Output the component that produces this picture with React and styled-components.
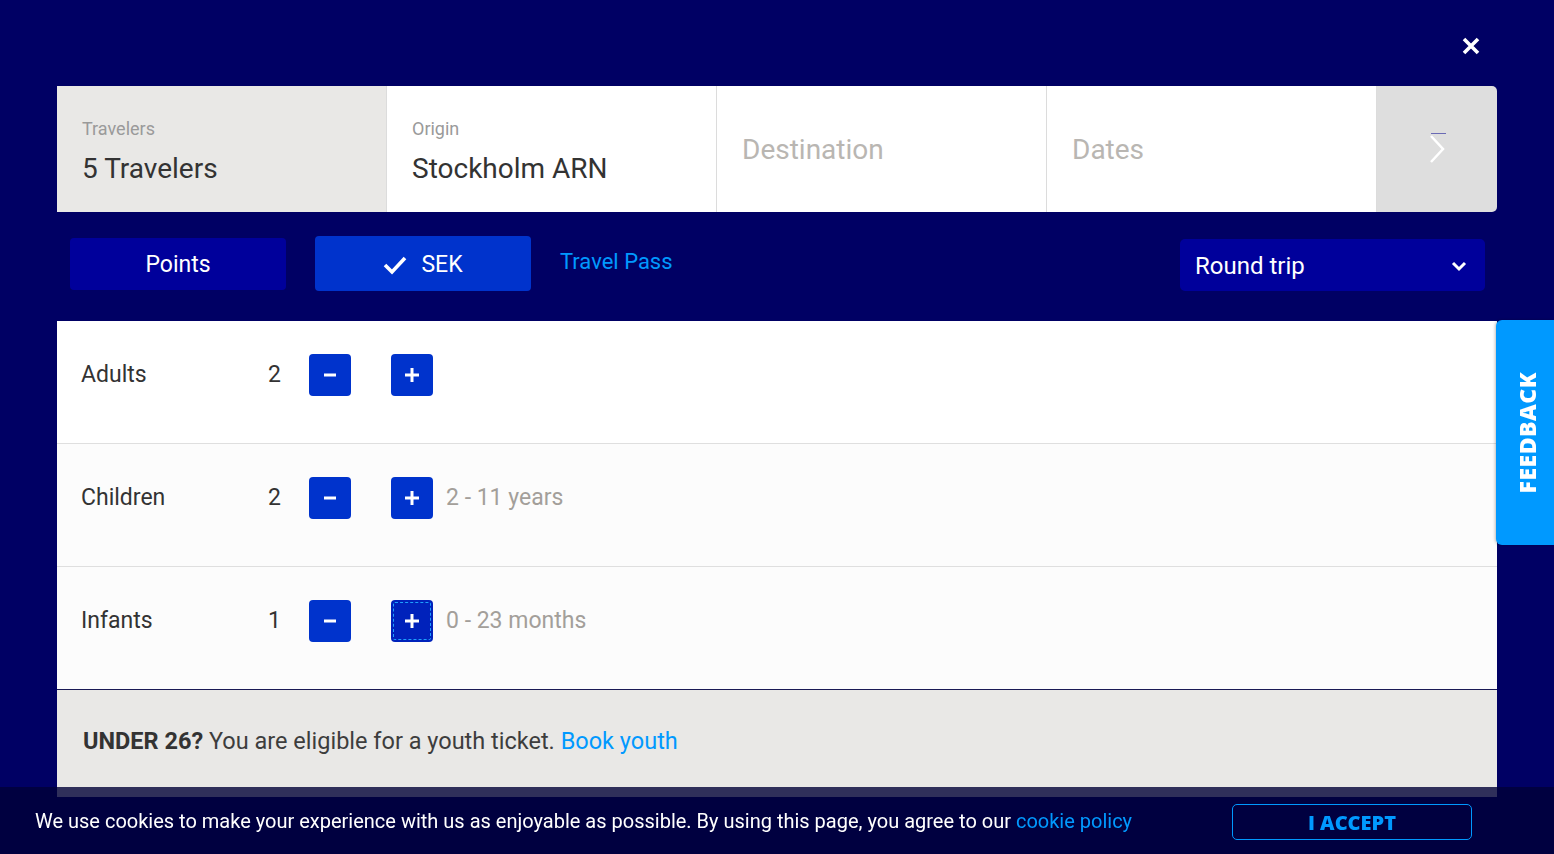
import styled, { createGlobalStyle } from "styled-components";

const GlobalStyle = createGlobalStyle`
  html, body {
    margin: 0;
    background: #000064;
    font-family: Roboto, "Liberation Sans", sans-serif;
    overflow: hidden;
  }
`;

const Page = styled.div`
  position: relative;
  padding: 86px 57px 0;
  height: 768px;
`;

const CloseButton = styled.button`
  position: absolute;
  top: 34px;
  right: 71px;
  width: 24px;
  height: 24px;
  padding: 0;
  border: 0;
  background: transparent;
  cursor: pointer;
`;

const SearchBar = styled.div`
  display: grid;
  grid-template-columns: repeat(4, 330px) 120px;
  height: 126px;
  border-radius: 0 5px 5px 0;
  overflow: hidden;
`;

const Field = styled.div`
  display: flex;
  flex-direction: column;
  justify-content: center;
  padding: 0 24px 0 25px;
  background: ${p => p.$bg || "#fff"};
  border-right: 1px solid #dcdcdc;
`;

const FieldLabel = styled.div`
  font-size: 18px;
  color: #9a9a9a;
  margin: 4px 0 13px;
`;

const FieldValue = styled.div`
  font-size: 28px;
  color: ${p => (p.$placeholder ? "#b9b6b2" : "#333")};
`;

const NextCell = styled.div`
  position: relative;
  display: flex;
  align-items: center;
  justify-content: center;
  background: #dedede;
`;

const FocusMark = styled.span`
  position: absolute;
  left: 54px;
  top: 47px;
  width: 15px;
  height: 1px;
  background: #6a6ab4;
`;

const Options = styled.div`
  display: flex;
  align-items: center;
  padding: 24px 12px 30px 13px;
`;

const Toggle = styled.button`
  display: flex;
  align-items: center;
  justify-content: center;
  gap: 14px;
  width: 216px;
  height: ${p => (p.$active ? "55px" : "52px")};
  margin-right: 29px;
  padding: 2px 0 0;
  border: 0;
  border-radius: 4px;
  background: ${p => (p.$active ? "#0033cc" : "#00009b")};
  color: #fff;
  font-family: inherit;
  font-size: 23px;
  cursor: pointer;
`;

const TextLink = styled.a`
  color: #0099ff;
  font-size: ${p => p.$size || "inherit"};
  text-decoration: none;
  cursor: pointer;
`;

const TravelPass = styled(TextLink)`
  margin-top: -5px;
  font-size: 22px;
`;

const Select = styled.button`
  display: flex;
  align-items: center;
  justify-content: space-between;
  width: 305px;
  height: 52px;
  margin: 3px 0 0 auto;
  padding: 2px 18px 0 15px;
  border: 0;
  border-radius: 5px;
  background: #00009b;
  color: #fff;
  font-family: inherit;
  font-size: 24px;
  cursor: pointer;
`;

const Panel = styled.div`
  background: #fff;
`;

const Row = styled.div`
  display: flex;
  align-items: center;
  height: 123px;
  box-sizing: border-box;
  padding: 0 0 15px 24px;
  background: ${p => (p.$alt ? "#fcfcfc" : "#fff")};
  border-bottom: 1px solid #dfdfdf;
  &:last-child {
    border-bottom: 1px solid #1a1a55;
  }
`;

const RowLabel = styled.div`
  width: 187px;
  font-size: 23px;
  color: #333;
`;

const Count = styled.div`
  width: 41px;
  font-size: 23px;
  color: #333;
`;

const Step = styled.button`
  display: flex;
  align-items: center;
  justify-content: center;
  width: 42px;
  height: 42px;
  padding: 0;
  margin-right: ${p => p.$gap || "0"};
  border: 0;
  border-radius: 4px;
  background: ${p => (p.$focus ? "#0022bb" : "#0033cc")};
  outline: ${p => (p.$focus ? "1px dashed #1ea0ff" : "none")};
  outline-offset: -3px;
  cursor: pointer;
`;

const Hint = styled.span`
  margin-left: 13px;
  font-size: 23px;
  color: #a39f9a;
`;

const Youth = styled.div`
  height: 107px;
  padding: 37px 26px 0;
  box-sizing: border-box;
  background: #e9e8e6;
  font-size: 23.5px;
  color: #3d3d3d;
`;

const Strong = styled.strong`
  font-weight: 700;
  color: #333;
`;

const Feedback = styled.button`
  position: fixed;
  top: 320px;
  right: 0;
  width: 58px;
  height: 225px;
  display: flex;
  align-items: center;
  justify-content: center;
  padding: 0 0 0 3px;
  border: 0;
  border-radius: 6px 0 0 6px;
  background: #0099ff;
  color: #fff;
  cursor: pointer;
  box-shadow: -1px 0 3px rgba(0, 0, 0, 0.25);
`;

const FeedbackText = styled.span`
  writing-mode: vertical-rl;
  transform: rotate(180deg);
  font-family: "Open Sans", sans-serif;
  font-size: 23px;
  font-weight: 800;
  letter-spacing: 0.5px;
`;

const CookieBar = styled.div`
  position: fixed;
  left: 0;
  right: 0;
  bottom: 0;
  height: 67px;
  display: flex;
  align-items: center;
  justify-content: space-between;
  padding: 0 82px 0 35px;
  background: rgba(0, 0, 55, 0.8);
  color: #fff;
  font-size: 20px;
`;

const CookieText = styled.div`
  padding-top: 1px;
`;

const AcceptButton = styled.button`
  width: 240px;
  height: 36px;
  margin-top: 3px;
  border: 1px solid #0099ff;
  border-radius: 5px;
  background: transparent;
  color: #0099ff;
  font-family: "Open Sans", sans-serif;
  font-weight: 800;
  font-size: 20px;
  cursor: pointer;
`;

const Minus = () => (
  <svg width="14" height="14" viewBox="0 0 14 14">
    <rect x="1" y="5.5" width="12" height="3" fill="#fff" />
  </svg>
);

const Plus = () => (
  <svg width="16" height="16" viewBox="0 0 16 16">
    <rect x="1" y="6.5" width="14" height="3" fill="#fff" />
    <rect x="6.5" y="1" width="3" height="14" fill="#fff" />
  </svg>
);

const travelers = [
  { label: "Adults", count: 2 },
  { label: "Children", count: 2, hint: "2 - 11 years" },
  { label: "Infants", count: 1, hint: "0 - 23 months", focus: true },
];

export default function App() {
  return (
    <>
      <GlobalStyle />
      <Page>
        <CloseButton aria-label="Close">
          <svg width="24" height="24" viewBox="0 0 24 24">
            <path d="M5 5 L19 19 M19 5 L5 19" stroke="#fff" strokeWidth="3.6" />
          </svg>
        </CloseButton>

        <SearchBar>
          <Field $bg="#e9e8e6">
            <FieldLabel>Travelers</FieldLabel>
            <FieldValue>5 Travelers</FieldValue>
          </Field>
          <Field>
            <FieldLabel>Origin</FieldLabel>
            <FieldValue>Stockholm ARN</FieldValue>
          </Field>
          <Field>
            <FieldValue $placeholder>Destination</FieldValue>
          </Field>
          <Field>
            <FieldValue $placeholder>Dates</FieldValue>
          </Field>
          <NextCell>
            <FocusMark />
            <svg width="18" height="30" viewBox="0 0 18 30">
              <path d="M3 2 L15 15 L3 28" stroke="#fff" strokeWidth="2.5" fill="none" />
            </svg>
          </NextCell>
        </SearchBar>

        <Options>
          <Toggle>Points</Toggle>
          <Toggle $active>
            <svg width="24" height="20" viewBox="0 0 24 20">
              <path d="M2 10 L9 17 L22 3" stroke="#fff" strokeWidth="3.6" fill="none" />
            </svg>
            SEK
          </Toggle>
          <TravelPass>Travel Pass</TravelPass>
          <Select>
            Round trip
            <svg width="16" height="12" viewBox="0 0 16 12">
              <path d="M2 3 L8 9 L14 3" stroke="#fff" strokeWidth="3" fill="none" />
            </svg>
          </Select>
        </Options>

        <Panel>
          {travelers.map((t, i) => (
            <Row key={t.label} $alt={i > 0}>
              <RowLabel>{t.label}</RowLabel>
              <Count>{t.count}</Count>
              <Step $gap="40px" aria-label="Decrease"><Minus /></Step>
              <Step $focus={t.focus} aria-label="Increase"><Plus /></Step>
              {t.hint && <Hint>{t.hint}</Hint>}
            </Row>
          ))}
        </Panel>

        <Youth>
          <Strong>UNDER 26?</Strong> You are eligible for a youth ticket.{" "}
          <TextLink>Book youth</TextLink>
        </Youth>
      </Page>

      <Feedback>
        <FeedbackText>FEEDBACK</FeedbackText>
      </Feedback>

      <CookieBar>
        <CookieText>
          We use cookies to make your experience with us as enjoyable as possible. By using this page, you agree to our{" "}
          <TextLink $size="20px">cookie policy</TextLink>
        </CookieText>
        <AcceptButton>I ACCEPT</AcceptButton>
      </CookieBar>
    </>
  );
}
